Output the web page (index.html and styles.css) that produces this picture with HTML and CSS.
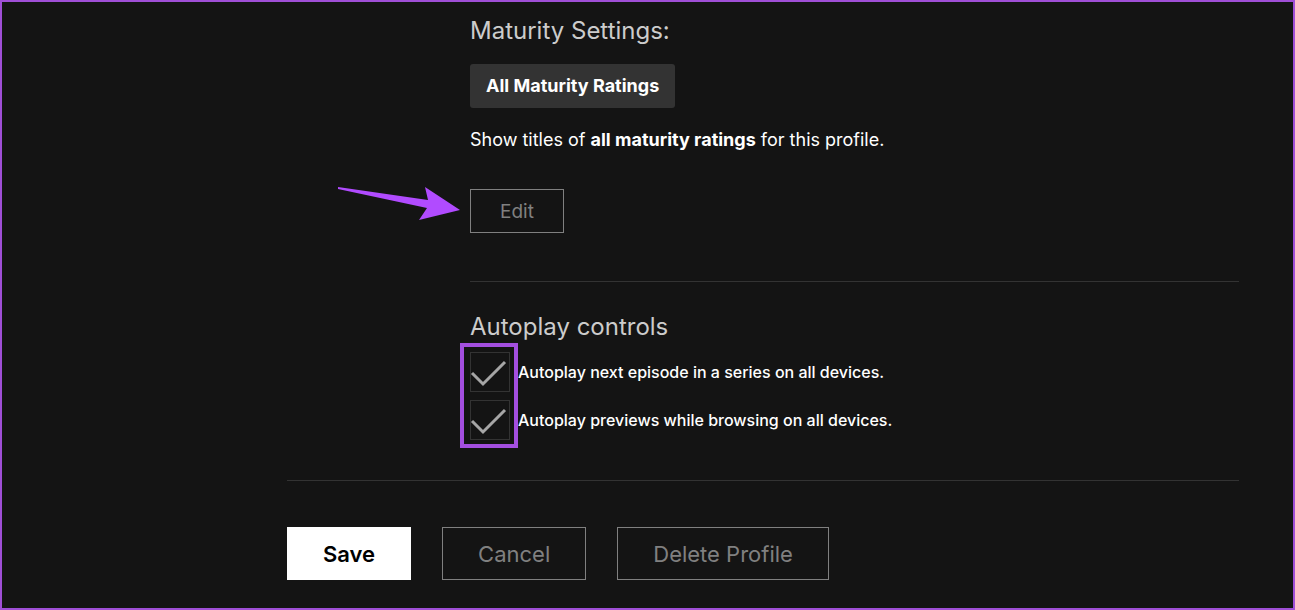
FILE: index.html
```html
<!DOCTYPE html>
<html lang="en">
<head>
  <meta charset="UTF-8">
  <meta name="viewport" content="width=device-width, initial-scale=1.0">
  <title>Edit Profile</title>
  <link rel="stylesheet" href="styles.css">
</head>
<body>

  <form class="profile">
    <section class="settings">
      <h2>Maturity Settings:</h2>
      <div class="rating">All Maturity Ratings</div>
      <p class="description">Show titles of <b>all maturity ratings</b> for this profile.</p>
      <div class="edit">
        <button type="button" class="btn btn-small">Edit</button>
        <svg class="arrow" width="124" height="36" viewBox="0 0 124 36" aria-hidden="true">
          <path d="M1 2 L91 15 L88 2 L123 25 L82 35 L90 23 L1 4 Z" fill="#b14bff"/>
        </svg>
      </div>
    </section>

    <section class="settings autoplay">
      <h2>Autoplay controls</h2>
      <div class="options">
        <div class="option">
          <span class="check">
            <input type="checkbox" id="next-episode" checked>
            <svg viewBox="0 0 40 40" aria-hidden="true"><path d="M2 21 L13 32 L35 10"/></svg>
          </span>
          <label for="next-episode">Autoplay next episode in a series on all devices.</label>
        </div>
        <div class="option">
          <span class="check">
            <input type="checkbox" id="previews" checked>
            <svg viewBox="0 0 40 40" aria-hidden="true"><path d="M2 21 L13 32 L35 10"/></svg>
          </span>
          <label for="previews">Autoplay previews while browsing on all devices.</label>
        </div>
        <div class="highlight"></div>
      </div>
    </section>

    <div class="actions">
      <button type="submit" class="btn btn-save">Save</button>
      <button type="button" class="btn">Cancel</button>
      <button type="button" class="btn">Delete Profile</button>
    </div>
  </form>

</body>
</html>
```
FILE: styles.css
```css
* {
  box-sizing: border-box;
}
body {
  margin: 0;
  min-height: 100vh;
  border: 2px solid #a04fd6;
  background-color: #141414;
  color: #fff;
  font-family: Inter, "Liberation Sans", sans-serif;
}
.profile {
  padding: 13px 54px 28px 285px;
}
.settings {
  margin-left: 183px;
}
h2 {
  margin: 0;
  color: #ccc;
  font-size: 24px;
  font-weight: 400;
  line-height: 32px;
}
.rating {
  display: inline-block;
  margin-top: 17px;
  padding: 0 16px;
  border-radius: 3px;
  background-color: #333;
  font-size: 18px;
  font-weight: 700;
  line-height: 44px;
}
.description {
  margin: 20px 0 37px;
  font-size: 18px;
  line-height: 24px;
}
.edit {
  position: relative;
  display: flex;
}
.arrow {
  position: absolute;
  left: -133px;
  top: -4px;
}
.btn {
  height: 53px;
  padding: 0 35px;
  border: 1px solid #808080;
  background: transparent;
  color: #808080;
  font-family: inherit;
  font-size: 22px;
  cursor: pointer;
}
.btn-small {
  height: 44px;
  padding: 0 29px;
  font-size: 19px;
}
.btn-save {
  border-color: #fff;
  background-color: #fff;
  color: #000;
  font-weight: 600;
}
.autoplay {
  margin-top: 48px;
  padding: 29px 0 40px;
  border-top: 1px solid #333;
}
.options {
  position: relative;
  display: flex;
  flex-direction: column;
  gap: 8px;
  margin-top: 9px;
}
.option {
  display: flex;
  align-items: center;
  gap: 8px;
  font-size: 16px;
  font-weight: 500;
}
.check {
  display: grid;
  width: 40px;
  height: 40px;
}
.check input,
.check svg {
  grid-area: 1 / 1;
  width: 40px;
  height: 40px;
  margin: 0;
}
.check input {
  appearance: none;
  border: 1px solid #333;
}
.check svg {
  display: none;
  fill: none;
  stroke: #a6a6a6;
  stroke-width: 3;
  pointer-events: none;
}
.check input:checked + svg {
  display: block;
}
.highlight {
  position: absolute;
  inset: -9px auto -8px -10px;
  width: 58px;
  border: 4px solid #a44fe0;
  pointer-events: none;
}
.actions {
  display: flex;
  gap: 31px;
  padding-top: 46px;
  border-top: 1px solid #333;
}
```
